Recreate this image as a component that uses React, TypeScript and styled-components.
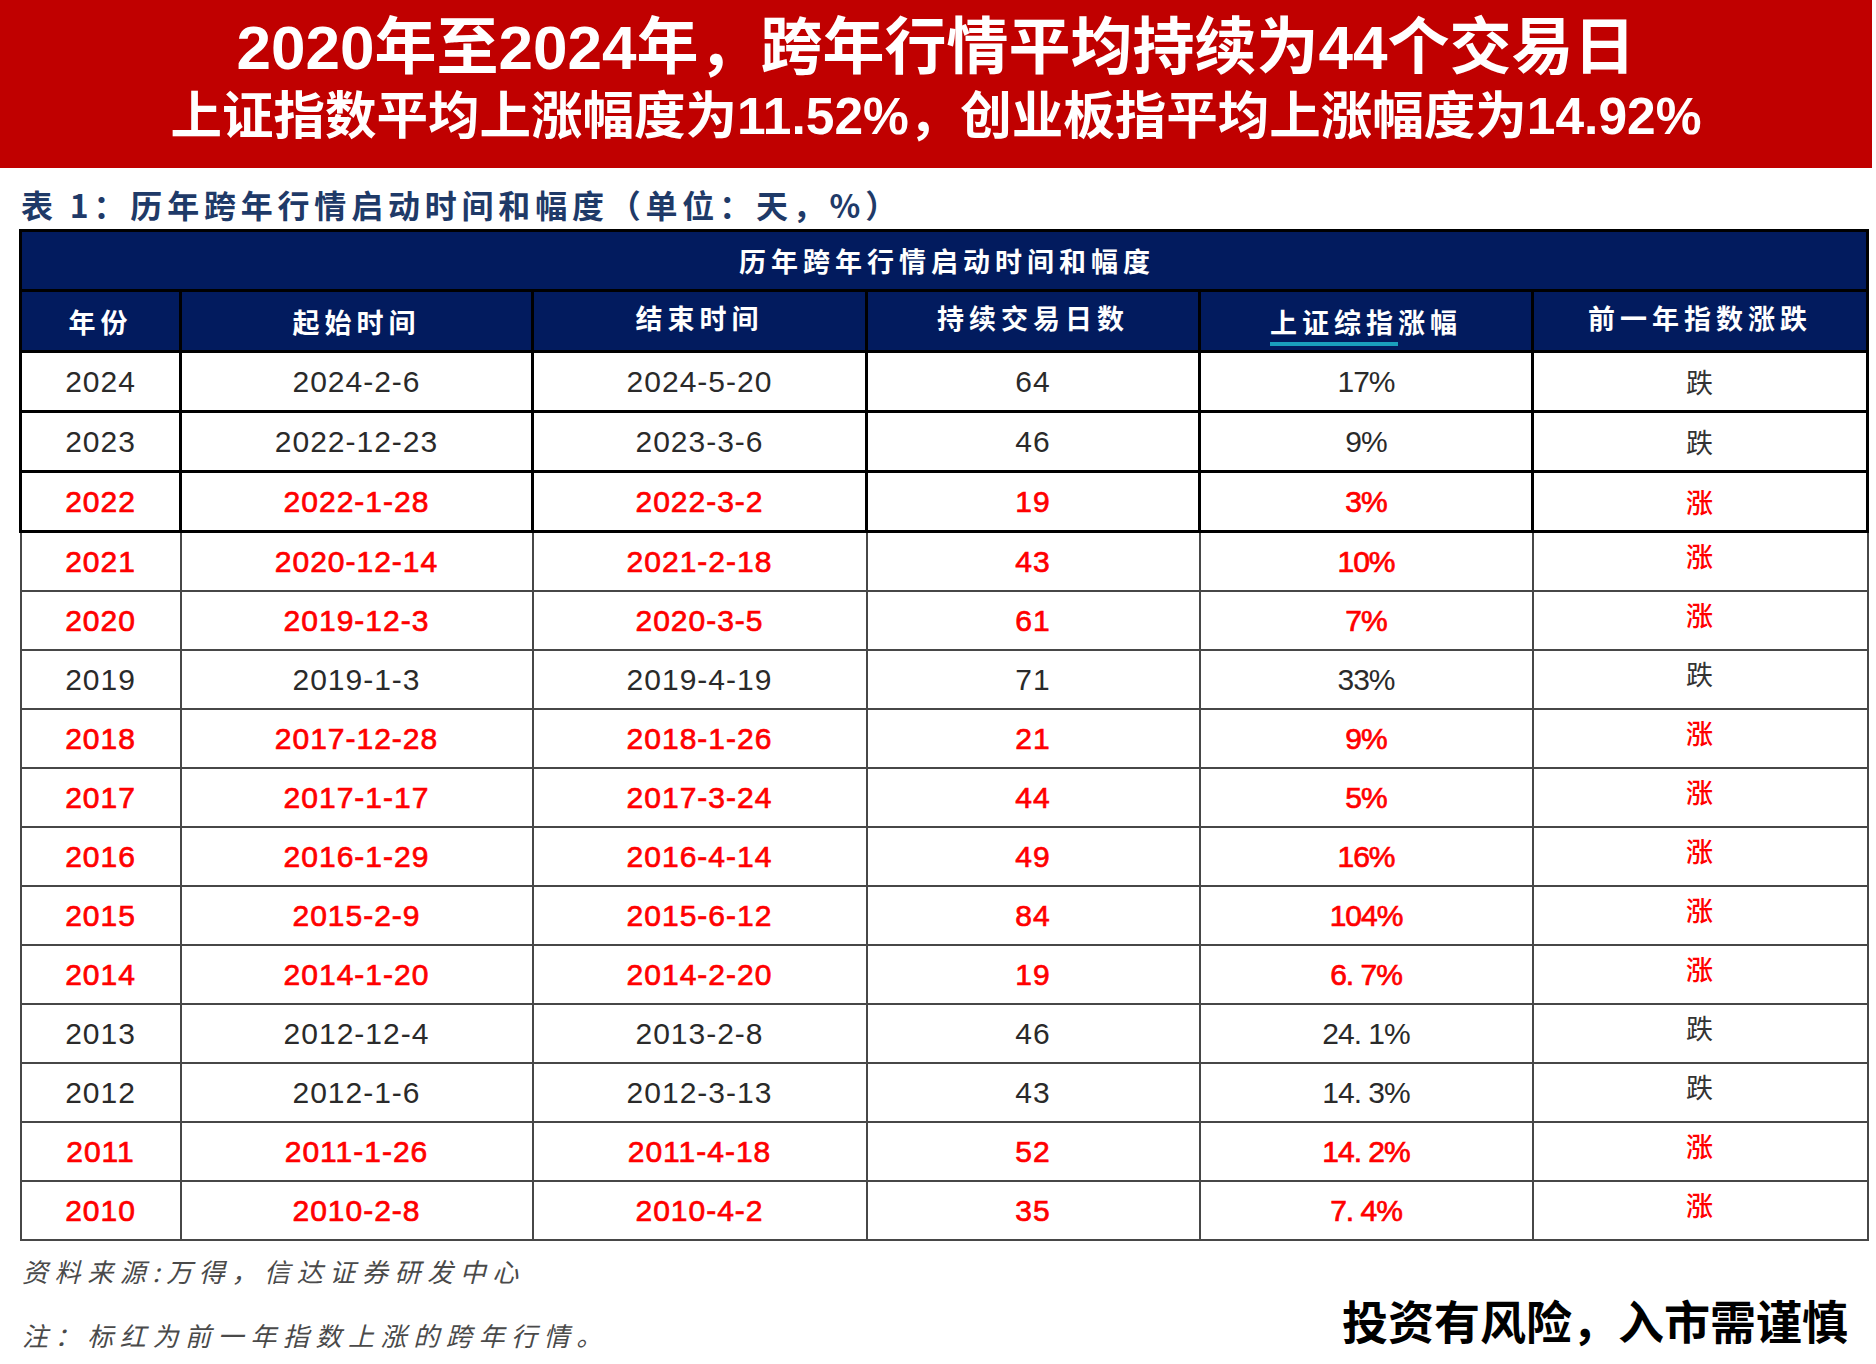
import React from "react";
import styled, { createGlobalStyle, css } from "styled-components";

interface rowType {
  year: string;
  start: string;
  end: string;
  days: string;
  gain: string;
  prev: string;
  up: boolean;
}

const rows: rowType[] = [
  { year: "2024", start: "2024-2-6", end: "2024-5-20", days: "64", gain: "17%", prev: "跌", up: false },
  { year: "2023", start: "2022-12-23", end: "2023-3-6", days: "46", gain: "9%", prev: "跌", up: false },
  { year: "2022", start: "2022-1-28", end: "2022-3-2", days: "19", gain: "3%", prev: "涨", up: true },
  { year: "2021", start: "2020-12-14", end: "2021-2-18", days: "43", gain: "10%", prev: "涨", up: true },
  { year: "2020", start: "2019-12-3", end: "2020-3-5", days: "61", gain: "7%", prev: "涨", up: true },
  { year: "2019", start: "2019-1-3", end: "2019-4-19", days: "71", gain: "33%", prev: "跌", up: false },
  { year: "2018", start: "2017-12-28", end: "2018-1-26", days: "21", gain: "9%", prev: "涨", up: true },
  { year: "2017", start: "2017-1-17", end: "2017-3-24", days: "44", gain: "5%", prev: "涨", up: true },
  { year: "2016", start: "2016-1-29", end: "2016-4-14", days: "49", gain: "16%", prev: "涨", up: true },
  { year: "2015", start: "2015-2-9", end: "2015-6-12", days: "84", gain: "104%", prev: "涨", up: true },
  { year: "2014", start: "2014-1-20", end: "2014-2-20", days: "19", gain: "6. 7%", prev: "涨", up: true },
  { year: "2013", start: "2012-12-4", end: "2013-2-8", days: "46", gain: "24. 1%", prev: "跌", up: false },
  { year: "2012", start: "2012-1-6", end: "2012-3-13", days: "43", gain: "14. 3%", prev: "跌", up: false },
  { year: "2011", start: "2011-1-26", end: "2011-4-18", days: "52", gain: "14. 2%", prev: "涨", up: true },
  { year: "2010", start: "2010-2-8", end: "2010-4-2", days: "35", gain: "7. 4%", prev: "涨", up: true },
];

const widths = [160, 352, 334, 333, 333, 335];

const App = () => {
  return (
    <>
      <GlobalStyle />
      <Page>
        <Banner>
          <BannerMain>2020年至2024年，跨年行情平均持续为44个交易日</BannerMain>
          <BannerSub>上证指数平均上涨幅度为11.52%，创业板指平均上涨幅度为14.92%</BannerSub>
        </Banner>

        <Caption>表 1：历年跨年行情启动时间和幅度（单位：天，%）</Caption>

        <Table>
          <colgroup>
            {widths.map((w, i) => (
              <col key={i} style={{ width: w }} />
            ))}
          </colgroup>
          <thead>
            <tr>
              <TitleCell colSpan={6}>历年跨年行情启动时间和幅度</TitleCell>
            </tr>
            <tr>
              <HeadCell>年份</HeadCell>
              <HeadCell>起始时间</HeadCell>
              <HeadCell raised>结束时间</HeadCell>
              <HeadCell raised>持续交易日数</HeadCell>
              <HeadCell>
                <Squiggle>上证综指</Squiggle>涨幅
              </HeadCell>
              <HeadCell raised>前一年指数涨跌</HeadCell>
            </tr>
          </thead>
          <tbody>
            {rows.map((r, i) => (
              <Row key={r.year} heavy={i < 3}>
                <Cell up={r.up}>{r.year}</Cell>
                <Cell up={r.up}>{r.start}</Cell>
                <Cell up={r.up}>{r.end}</Cell>
                <Cell up={r.up}>{r.days}</Cell>
                <Cell up={r.up} tight>
                  {r.gain}
                </Cell>
                <Cell up={r.up}>
                  <Trend up={r.up} lifted={i >= 3}>
                    {r.prev}
                  </Trend>
                </Cell>
              </Row>
            ))}
          </tbody>
        </Table>

        <Footer>
          <Notes>
            <Note>资料来源:万得，信达证券研发中心</Note>
            <Note>注：标红为前一年指数上涨的跨年行情。</Note>
          </Notes>
          <Warning>投资有风险，入市需谨慎</Warning>
        </Footer>
      </Page>
    </>
  );
};

export default App;

const GlobalStyle = createGlobalStyle`
  html, body {
    margin: 0;
    padding: 0;
    background: #ffffff;
  }
  body {
    font-family: "Liberation Sans", "Noto Sans CJK SC", sans-serif;
  }
`;

const Page = styled.div`
  width: 1876px;
  height: 1364px;
  overflow: hidden;
  background: #ffffff;
`;

const Banner = styled.header`
  width: 1872px;
  height: 168px;
  box-sizing: border-box;
  padding-top: 13px;
  background: #c00000;
  color: #ffffff;
  display: flex;
  flex-direction: column;
  align-items: center;
  font-family: "Liberation Sans", "Noto Sans CJK SC", sans-serif;
  font-weight: 700;
  white-space: nowrap;
`;

const BannerMain = styled.div`
  font-size: 62px;
  line-height: 70px;
`;

const BannerSub = styled.div`
  font-size: 51.5px;
  line-height: 66px;
`;

const Caption = styled.div`
  margin: 16px 0 0 21px;
  height: 40px;
  line-height: 40px;
  font-family: "Noto Sans CJK SC", sans-serif;
  font-size: 32px;
  font-weight: 700;
  letter-spacing: 4.8px;
  color: #1f3a68;
  white-space: nowrap;
`;

const Table = styled.table`
  margin: 5px 0 0 19px;
  width: 1847px;
  table-layout: fixed;
  border-collapse: collapse;
`;

const navyCell = css`
  background: #021b5e;
  color: #ffffff;
  font-family: "Noto Sans CJK SC", sans-serif;
  font-weight: 700;
  font-size: 27px;
  letter-spacing: 5px;
  text-align: center;
  border: 3px solid #000000;
  padding: 0;
  white-space: nowrap;
`;

const TitleCell = styled.th`
  ${navyCell};
  height: 57px;
  padding-left: 6px;
`;

const HeadCell = styled.th<{ raised?: boolean }>`
  ${navyCell};
  height: 50px;
  padding-bottom: ${(p) => (p.raised ? "8px" : "0")};
`;

const Squiggle = styled.span`
  text-decoration: underline;
  text-decoration-color: #1a9fbd;
  text-decoration-thickness: 4px;
  text-underline-offset: 9px;
  text-decoration-skip-ink: none;
`;

const Row = styled.tr<{ heavy: boolean }>`
  & > td {
    border: ${(p) => (p.heavy ? "3px solid #000000" : "2px solid #474747")};
  }
`;

const Cell = styled.td<{ up: boolean; tight?: boolean }>`
  height: 57px;
  padding: 0;
  text-align: center;
  font-family: "Liberation Sans", "Noto Sans CJK SC", sans-serif;
  font-size: 30px;
  letter-spacing: ${(p) => (p.tight ? "-1px" : "1px")};
  font-weight: 400;
  color: ${(p) => (p.up ? "#ff0000" : "#2a2a2a")};
  -webkit-text-stroke: ${(p) => (p.up ? "0.7px #ff0000" : "0")};
  white-space: nowrap;
`;

const Trend = styled.span<{ up: boolean; lifted: boolean }>`
  display: inline-block;
  font-family: "Noto Sans CJK SC", sans-serif;
  font-size: 27px;
  font-weight: ${(p) => (p.up ? 500 : 400)};
  color: ${(p) => (p.up ? "#ff0000" : "#333333")};
  -webkit-text-stroke: 0;
  transform: translateY(${(p) => (p.lifted ? "-6px" : "0")});
`;

const Footer = styled.footer`
  display: flex;
  justify-content: space-between;
  align-items: flex-end;
  padding: 10px 28px 0 22px;
`;

const Notes = styled.div`
  display: flex;
  flex-direction: column;
  gap: 24px;
`;

const Note = styled.div`
  font-family: "Noto Sans CJK SC", sans-serif;
  font-style: italic;
  font-size: 26px;
  line-height: 40px;
  letter-spacing: 6.6px;
  color: #4a4a4a;
  white-space: nowrap;
`;

const Warning = styled.div`
  margin-bottom: 8px;
  font-family: "Noto Sans CJK SC", sans-serif;
  font-weight: 700;
  font-size: 46px;
  line-height: 56px;
  color: #000000;
  white-space: nowrap;
`;
